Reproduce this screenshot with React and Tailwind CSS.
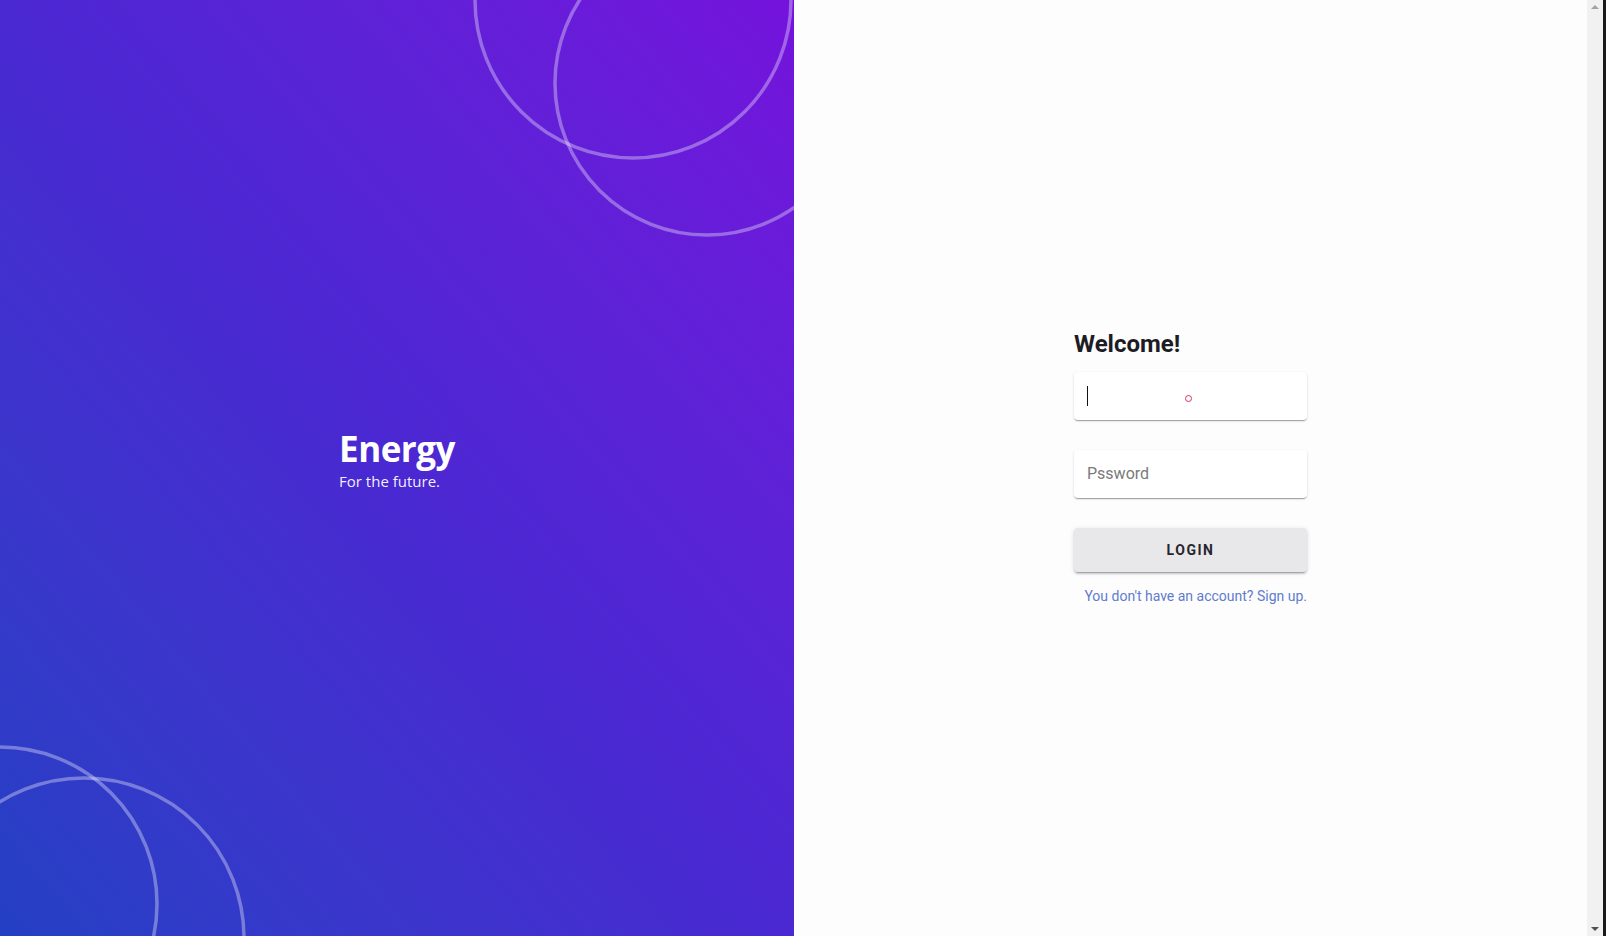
import React from 'react'

function Rings({ className, children }) {
  return (
    <svg className={className} width="794" height="936" viewBox="0 0 794 936" fill="none">
      {children}
    </svg>
  )
}

export default function App() {
  return (
    <div className="flex h-[936px] w-[1606px] overflow-hidden bg-[#fdfdfd]">
      {/* left hero */}
      <div className="relative flex w-[794px] shrink-0 items-center justify-center bg-gradient-to-tr from-[#2340c4] via-[#4a28d2] to-[#7412dc]">
        <Rings className="pointer-events-none absolute inset-0">
          <g stroke="rgba(255,255,255,0.34)" strokeWidth="3.5">
            <circle cx="633" cy="0" r="158" />
            <circle cx="707" cy="83" r="152" />
            <circle cx="0" cy="904" r="157" />
            <circle cx="84" cy="938" r="160" />
          </g>
        </Rings>
        <div className="relative mt-[-16px] text-white" style={{ fontFamily: '"Open Sans", sans-serif' }}>
          <div className="text-[35px] font-bold leading-[40px] tracking-[-0.5px]">Energy</div>
          <div className="mt-[2px] text-[15px] leading-[20px] text-white/95">For the future.</div>
        </div>
      </div>

      {/* right form */}
      <div className="flex flex-1 items-center justify-center" style={{ fontFamily: 'Roboto, sans-serif' }}>
        <div className="mt-[-2px] flex w-[233px] flex-col">
          <h1 className="text-[24px] font-bold leading-[32px] text-[#1c1c24]">Welcome!</h1>
          <div className="relative mt-[12px] flex h-[48px] items-center rounded-[4px] bg-white px-[13px] shadow-[0_2px_1px_-1px_rgba(0,0,0,0.2),0_1px_1px_0_rgba(0,0,0,0.14),0_1px_3px_0_rgba(0,0,0,0.12)]">
            <span className="h-[20px] w-[1px] bg-[#111]" />
            <span className="absolute left-[111px] top-[23px] h-[7px] w-[7px] rounded-full border-[1.5px] border-[#e0305a]" />
          </div>
          <div className="mt-[30px] flex h-[48px] items-center rounded-[4px] bg-white px-[13px] text-[16px] text-[#7a7a7a] shadow-[0_2px_1px_-1px_rgba(0,0,0,0.2),0_1px_1px_0_rgba(0,0,0,0.14),0_1px_3px_0_rgba(0,0,0,0.12)]">
            Pssword
          </div>
          <button className="mt-[30px] h-[44px] rounded-[4px] bg-[#e8e8ea] text-[14px] font-bold tracking-[1.5px] text-[#26262c] shadow-[0_3px_1px_-2px_rgba(0,0,0,0.2),0_2px_2px_0_rgba(0,0,0,0.14),0_1px_5px_0_rgba(0,0,0,0.12)]">
            LOGIN
          </button>
          <p className="mt-[14px] text-right text-[14px] leading-[20px] text-[#5f7ccc]">
            You don't have an account? Sign up.
          </p>
        </div>
      </div>

      {/* scrollbar */}
      <div className="flex w-[16px] shrink-0 flex-col items-center justify-between bg-[#f1f1f1] py-[5px]">
        <span className="h-0 w-0 border-x-[4px] border-b-[4px] border-x-transparent border-b-[#a3a3a3]" />
        <span className="h-0 w-0 border-x-[4px] border-t-[4px] border-x-transparent border-t-[#505050]" />
      </div>
      <div className="w-[3px] shrink-0 bg-[#1a1a1a]" />
    </div>
  )
}
